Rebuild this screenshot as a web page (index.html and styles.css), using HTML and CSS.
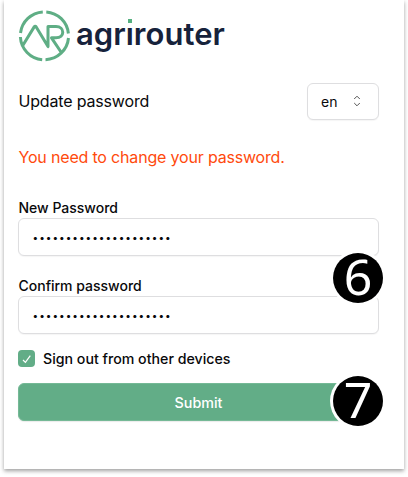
FILE: index.html
```html
<!DOCTYPE html>
<html lang="en">
<head>
<meta charset="utf-8">
<title>Update password</title>
<link rel="stylesheet" href="styles.css">
</head>
<body>
<main class="card">
  <header class="brand">
    <svg class="mark" width="52" height="52" viewBox="0 0 52 52" fill="none" stroke="#5fae85" stroke-width="3">
      <path d="M28.3 1.9A24 24 0 0 1 50.4 23.5M50.5 28A24 24 0 0 1 27.5 49.7M24.2 49.7A24 24 0 0 1 2.4 27M2.5 23A24 24 0 0 1 24.8 1.9"/>
      <path d="M4.3 36.2L16.2 16.9Q17.2 15.4 18.2 16.9L30 36.6V16.6H38C47 16.6 47 27.8 38 27.8H33.5L43 42" stroke-width="3" stroke-linejoin="round"/>
    </svg>
    <span class="wordmark">agr<span class="dot-i">ı</span>router</span>
  </header>
  <div class="heading">
    <h1>Update password</h1>
    <button class="language" type="button">en
      <svg width="8" height="12" viewBox="0 0 8 12" fill="none" stroke="#555" stroke-width="1"><path d="M1.2 4L4 1.2L6.8 4M1.2 8L4 10.8L6.8 8"/></svg>
    </button>
  </div>
  <p class="warning">You need to change your password.</p>
  <form>
    <div class="field">
      <label for="new">New Password</label>
      <input id="new" type="password" value="000000000000000000000">
    </div>
    <div class="field confirm">
      <label for="confirm">Confirm password</label>
      <input id="confirm" type="password" value="000000000000000000000">
      <span class="badge">6</span>
    </div>
    <div class="check">
      <span class="box"><svg width="17" height="17" viewBox="0 0 17 17" fill="none" stroke="#fff" stroke-width="1.2"><path d="M5 10L7.4 12.4L12.3 5.6"/></svg></span>
      <span>Sign out from other devices</span>
    </div>
    <div class="action">
      <button class="submit" type="button">Submit</button>
      <span class="badge">7</span>
    </div>
  </form>
</main>
</body>
</html>
```
FILE: styles.css
```css
* { box-sizing: border-box; }
html { height: 477px; background: #fff; }
body { margin: 0; height: 477px; color: #09090b; font-family: Inter, sans-serif; }
.card { width: 400px; height: 469px; margin-left: 4px; padding: 10px 25px 0 14px; background: #fff; box-shadow: 0 2px 4px rgba(0,0,0,.38); }
.brand { display: flex; height: 52px; }
.mark { flex: none; }
.wordmark { margin-left: 6px; font-size: 31px; line-height: 48px; font-weight: 600; letter-spacing: .05px; color: #16223b; white-space: nowrap; }
.dot-i { position: relative; }
.dot-i::before { content: ""; position: absolute; left: 2px; top: 4px; width: 4px; height: 4px; background: #55b080; }
.heading { display: flex; justify-content: space-between; align-items: center; height: 38px; margin-top: 20px; }
h1 { margin: 0; font-size: 16px; font-weight: 400; letter-spacing: -.17px; }
.language { display: flex; align-items: center; justify-content: space-between; width: 72px; height: 37px; padding: 0 17px 0 13px; border: 1px solid #dedee0; border-radius: 6px; background: #fff; font: 400 14px Inter, sans-serif; color: #09090b; box-shadow: 0 1px 1px rgba(0,0,0,.04); }
.warning { margin: 27px 0 0; font-size: 16px; line-height: 20px; letter-spacing: -.18px; color: #ff4a0d; }
form { margin-top: 31px; }
h1, label, .warning { padding-left: .5px; }
.field { position: relative; height: 78px; }
label { display: block; height: 20px; font-size: 14px; line-height: 19px; font-weight: 500; }
input { display: block; width: 361px; height: 38px; padding: 0 13.5px; border: 1px solid #dedee0; border-radius: 6px; outline: 0; background: #fff; color: #09090b; font: 400 10px Inter, sans-serif; letter-spacing: 1px; box-shadow: 0 1px 1px rgba(0,0,0,.04); }
.badge { position: absolute; top: -23px; left: 315px; width: 50px; height: 50px; border-radius: 50%; background: #000; color: #fff; font: 400 50px/47px "Noto Sans", sans-serif; text-align: center; box-shadow: 0 0 0 3px #fff; }
.check { display: flex; align-items: center; height: 17px; gap: 8px; margin-top: -4px; font-size: 14.2px; font-weight: 500; }
.box { display: flex; width: 17px; height: 17px; border-radius: 4px; background: #62ad87; }
.action { position: relative; margin-top: 16px; }
.submit { display: block; width: 361px; height: 38px; border: 1px solid #75b996; border-radius: 6px; background: #62ad87; color: #fff; font: 500 14.3px Inter, sans-serif; box-shadow: 0 1px 1px rgba(0,0,0,.08); }
.action .badge { top: -7px; }
```
